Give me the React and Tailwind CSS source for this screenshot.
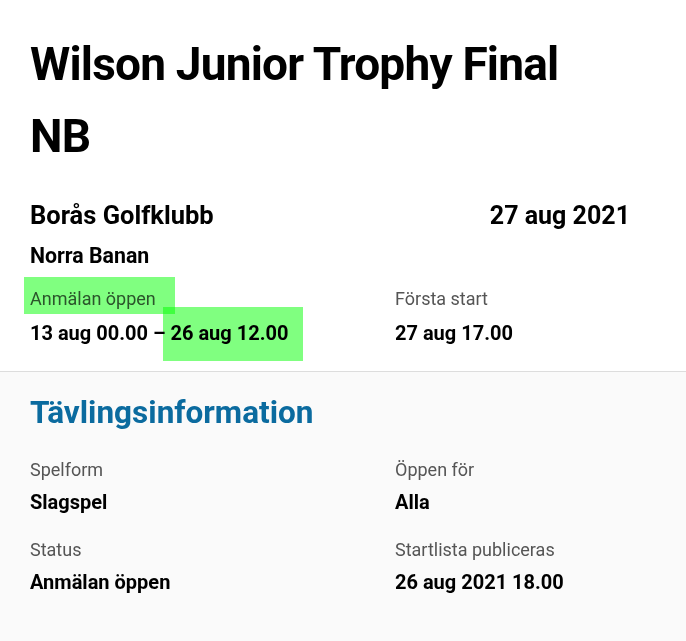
function Field({ label, value }) {
  return (
    <div>
      <div className="text-[18px] leading-[24px] text-[#555555]">{label}</div>
      <div className="mt-[6px] text-[20px] leading-[28px] font-bold text-black">{value}</div>
    </div>
  );
}

export default function App() {
  return (
    <div className="relative min-h-screen bg-[#fafafa] text-black" style={{ fontFamily: 'Roboto, "Noto Sans", sans-serif' }}>
      <section className="bg-white border-b border-[#dddddd] pt-[28px] pb-[24px] px-[30px]">
        <h1 className="max-w-[560px] text-[46px] leading-[72px] font-bold tracking-[-0.8px]">
          Wilson Junior Trophy Final NB
        </h1>
        <div className="mt-[26px] w-[600px] flex justify-between items-baseline leading-[34px] font-bold">
          <span className="text-[25.5px]">Borås Golfklubb</span>
          <span className="text-[25px]">27 aug 2021</span>
        </div>
        <div className="mt-[9px] text-[21.3px] leading-[28px] font-bold">Norra Banan</div>
        <div className="mt-[17px] w-[600px] grid grid-cols-[365px_1fr]">
          <div>
            <div className="text-[18px] leading-[24px] text-[#555555]">Anmälan öppen</div>
            <div className="mt-[8px] text-[20px] leading-[28px] font-bold">13 aug 00.00 – 26 aug 12.00</div>
          </div>
          <div>
            <div className="text-[18px] leading-[24px] text-[#555555]">Första start</div>
            <div className="mt-[8px] text-[20px] leading-[28px] font-bold">27 aug 17.00</div>
          </div>
        </div>
      </section>
      <section className="px-[30px] pt-[21px] pb-[40px]">
        <h2 className="text-[31.5px] leading-[40px] font-bold text-[#0b6b9f]">Tävlingsinformation</h2>
        <div className="mt-[25px] w-[600px] grid grid-cols-[365px_1fr] gap-y-[22px]">
          <Field label="Spelform" value="Slagspel" />
          <Field label="Öppen för" value="Alla" />
          <Field label="Status" value="Anmälan öppen" />
          <Field label="Startlista publiceras" value="26 aug 2021 18.00" />
        </div>
      </section>
      <div className="absolute left-[24px] top-[277px] w-[151px] h-[37px] bg-[#80ff80] mix-blend-multiply pointer-events-none"></div>
      <div className="absolute left-[163px] top-[307px] w-[140px] h-[54px] bg-[#80ff80] mix-blend-multiply pointer-events-none"></div>
    </div>
  );
}
